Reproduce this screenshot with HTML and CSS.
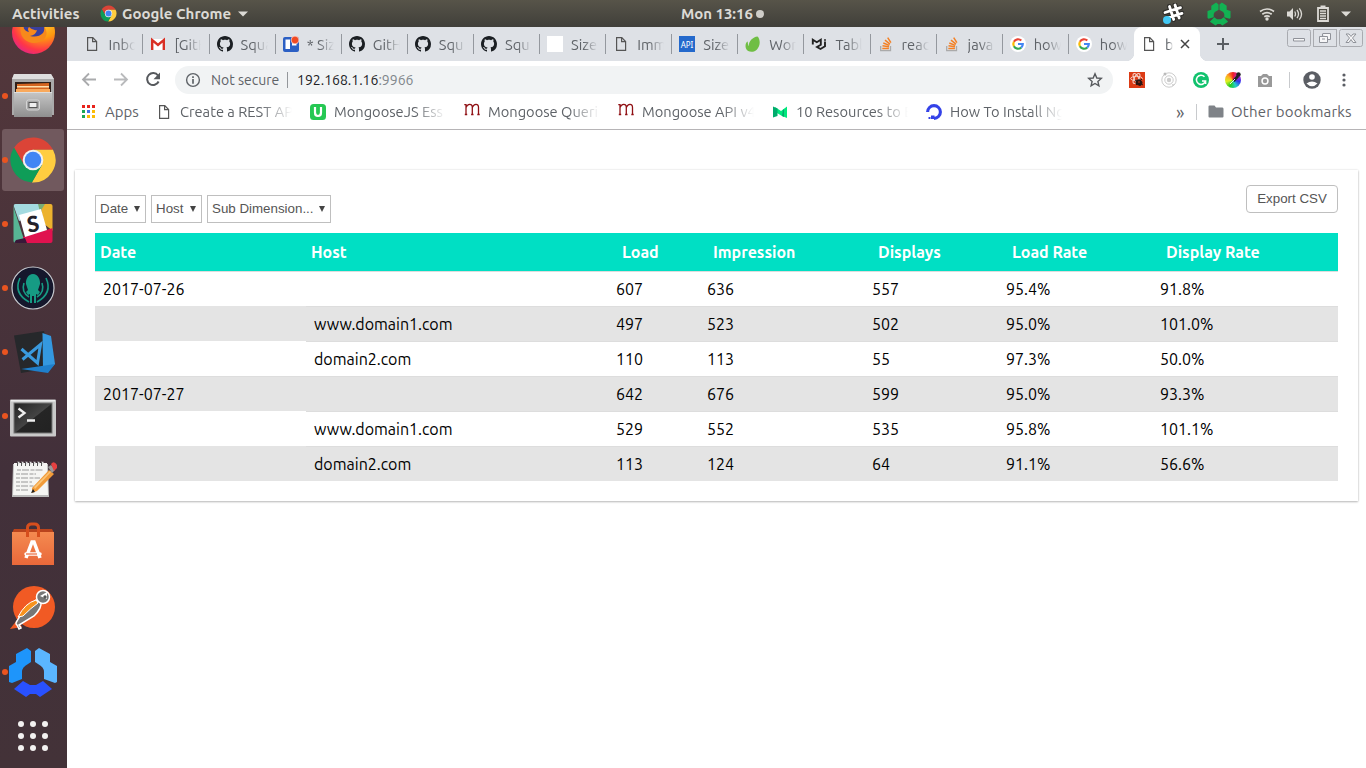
FILE: index.html
```html
<!DOCTYPE html>
<html lang="en">
<head>
<meta charset="utf-8">
<title>Report</title>
<link rel="stylesheet" href="styles.css">
</head>
<body>
<svg class="defs" width="0" height="0">
  <symbol id="chrome" viewBox="0 0 48 48">
    <path fill="#db4437" d="M5.1 11.8A22.5 22.5 0 0 1 44 13.7H24V24L15.1 29.1Z"/>
    <path fill="#ffcd40" d="M44 13.7A22.5 22.5 0 0 1 22.9 46.5L32.9 29.1 24 24V13.7Z"/>
    <path fill="#0f9d58" d="M22.9 46.5A22.5 22.5 0 0 1 5.1 11.8L15.1 29.1 24 24 32.9 29.1Z"/>
    <circle cx="24" cy="24" r="10.3" fill="#f1f1f1"/><circle cx="24" cy="24" r="8.3" fill="#4285f4"/>
  </symbol>
  <symbol id="page" viewBox="0 0 16 16"><path fill="none" stroke="#555" stroke-width="1.2" d="M3.6 1.6h5.2l3.8 3.9v8.9H3.6zM8.6 1.8v3.9h3.9"/></symbol>
  <symbol id="github" viewBox="0 0 16 16"><path fill="#1b1f23" d="M8 0C3.58 0 0 3.58 0 8c0 3.54 2.29 6.53 5.47 7.59.4.07.55-.17.55-.38 0-.19-.01-.82-.01-1.49-2.01.37-2.53-.49-2.69-.94-.09-.23-.48-.94-.82-1.13-.28-.15-.68-.52-.01-.53.63-.01 1.08.58 1.23.82.72 1.21 1.87.87 2.33.66.07-.52.28-.87.51-1.07-1.78-.2-3.64-.89-3.64-3.95 0-.87.31-1.59.82-2.15-.08-.2-.36-1.02.08-2.12 0 0 .67-.21 2.2.82.64-.18 1.32-.27 2-.27s1.36.09 2 .27c1.53-1.04 2.2-.82 2.2-.82.44 1.1.16 1.92.08 2.12.51.56.82 1.27.82 2.15 0 3.07-1.87 3.75-3.65 3.95.29.25.54.73.54 1.48 0 1.07-.01 1.93-.01 2.2 0 .21.15.46.55.38A8.01 8.01 0 0 0 16 8c0-4.42-3.58-8-8-8z"/></symbol>
  <symbol id="google" viewBox="0 0 16 16"><circle cx="8" cy="8" r="8" fill="#fff"/><g fill="none" stroke-width="2.2"><path stroke="#ea4335" d="M3.9 5.7A4.8 4.8 0 0 1 11.3 4.5"/><path stroke="#fbbc05" d="M3.9 10.3a4.8 4.8 0 0 1 0-4.6"/><path stroke="#34a853" d="M11.2 11.6a4.8 4.8 0 0 1-7.3-1.3"/><path stroke="#4285f4" d="M8 8h4.8a4.8 4.8 0 0 1-1.6 3.6"/></g></symbol>
  <symbol id="so" viewBox="0 0 16 16"><path fill="none" stroke="#aaa" stroke-width="1.3" d="M2.7 10v4.7h9.8V10"/><path fill="none" stroke="#f48024" stroke-width="1.5" d="M4.3 12.5h6.6M4.5 9.8l6.5.9M5.3 7l6 2.4M7 4.2l5 3.9M9.7 1.6l3.2 5"/></symbol>
  <symbol id="m" viewBox="0 0 16 16"><path fill="none" stroke="#901014" stroke-width="1.3" d="M.3 2.600h1.700V13M2 5.500C3.500 1.500 8.300 1 8.300 5.500V13M8.300 5.500c1.500-4 6.200-4.500 6.200 0V13M.8 12.500h2.400M7.100 12.500h2.400M13.300 12.500h2.400"/></symbol>
</svg>

<header class="panel">
  <span class="activities">Activities</span>
  <svg class="panel-chrome" width="17" height="17"><use href="#chrome"/></svg>
  <span class="appname">Google Chrome</span>
  <svg class="panel-arrow" width="10" height="6"><path fill="#dcdad5" d="M0 .5h10L5 5.5z"/></svg>
  <span class="clock">Mon 13:16</span><i class="clock-dot"></i>
  <div class="tray">
    <svg width="22" height="22" viewBox="0 0 22 22"><path fill="none" stroke="#302f2b" stroke-width="5" stroke-linecap="round" d="M7.5 3.5l4.2 13M13 2l4.2 13M3 9.5l15.5-4.8M5 15l15-4.6"/><path fill="none" stroke="#fff" stroke-width="2.8" stroke-linecap="round" d="M7.5 3.5l4.2 13M13 2l4.2 13M3 9.5l15.5-4.8M5 15l15-4.6"/><circle cx="5" cy="17" r="4" fill="#42c8f4"/></svg>
    <svg width="24" height="24" viewBox="8 7 50 50" class="tray-hub"><g fill="#12b253"><path d="M27 8l5 4v11l-3 2q-6 2-7 7v7L11 42l-2-2V26l8-3v-8z"/><path d="M39 8l-5 4v11l3 2q6 2 7 7v7l11 3 2-2V26l-8-3v-8z"/><path d="M14 48l9-9 6 4h8l6-4 9 9-12 8-4-3h-6l-4 3z"/></g></svg>
    <svg width="18" height="14" viewBox="0 0 18 14" class="tray-wifi"><g fill="none" stroke="#dcdad5" stroke-width="1.7"><path d="M2 4.5q7-5 14 0M4.3 7.2q4.7-3.2 9.4 0M6.3 9.8q2.7-1.8 5.4 0"/></g><circle cx="9" cy="12" r="1.7" fill="#dcdad5"/></svg>
    <svg width="17" height="14" viewBox="0 0 17 14" class="tray-vol"><path fill="#dcdad5" d="M1 4.5h2.5L7 1v12L3.500 9.500H1z"/><path fill="none" stroke="#dcdad5" stroke-width="1.3" d="M8.7 4.5q1.600 2.500 0 5M11 2.800q3 4.200 0 8.400M13.300 1.300q4.500 5.700 0 11.400"/></svg>
    <svg width="14" height="17" viewBox="0 0 14 17" class="tray-bat"><path fill="none" stroke="#dcdad5" stroke-width="1.8" d="M2 3h10v13H2zM4.500 1.300h5"/><path stroke="#dcdad5" stroke-width="1.500" d="M4 6h6M4 8.500h6M4 11h6M4 13.500h6"/></svg>
    <svg width="10" height="6" class="tray-arrow"><path fill="#dcdad5" d="M0 .5h10L5 5.500z"/></svg>
  </div>
</header>

<div class="desktop">
<nav class="dock">
  <div class="app"><svg viewBox="0 0 67 64"><defs><radialGradient id="ff" cx=".7" cy=".2" r=".95"><stop offset="0" stop-color="#ffd43a"/><stop offset=".45" stop-color="#ff980e"/><stop offset=".75" stop-color="#ff3647"/><stop offset="1" stop-color="#d8209f"/></radialGradient></defs><circle cx="33.500" cy="32.500" r="21.500" fill="url(#ff)"/><circle cx="34" cy="31" r="11" fill="#3a3f9c"/><path fill="#f7891b" d="M22 22q1 9 7 10-2-3 0-5 4 4 8 3-1 5-7 6 8 2 13-3 2-3 1-7 6 9-2 15-10 5-18-2-6-7-2-17z"/></svg></div>
  <div class="app run"><svg viewBox="0 0 67 64"><defs><linearGradient id="fl" x2="0" y2="1"><stop stop-color="#c6c6c6"/><stop offset="1" stop-color="#8f8f8f"/></linearGradient></defs><path fill="#aaa" d="M14 10h37l3 5v36H12V15z"/><path fill="#dedede" d="M14 10h37l3 5H12z"/><path fill="#302019" d="M15 18h36v12H15z"/><path fill="#d56520" d="M17 20l32-1v10H17z"/><path fill="#ffe0ad" d="M17 22h32v1.500H17z"/><path fill="#f9a95c" d="M16 25h34v4H16z"/><path fill="url(#fl)" d="M14 28h38v25H14z"/><path fill="#ddd" d="M14 28h38v1H14z"/><rect x="26.500" y="36" width="13" height="10" rx="2" fill="#aaa" stroke="#d4d4d4"/><rect x="29" y="38.500" width="8" height="5" fill="#eee" stroke="#555"/></svg></div>
  <div class="app run active"><svg viewBox="0 0 67 64"><use href="#chrome" x="9" y="8" width="48" height="48"/></svg></div>
  <div class="app run"><svg viewBox="0 0 67 64"><defs><clipPath id="sl"><rect x="13.500" y="12" width="39" height="39" rx="2"/></clipPath></defs><g clip-path="url(#sl)"><path fill="#a4dbe0" d="M13 12h28v10l-22 7z"/><path fill="#57b694" d="M13 13l12 38H13z"/><path fill="#ecb22e" d="M40 12h13v27l-9-7z"/><path fill="#79ad76" d="M38 12h7l-5 8z"/><path fill="#e0124f" d="M25 51l-2-6 30-9v15z"/><path fill="#391839" d="M14 51l2-3 9-2 2 5z"/><path fill="#fff" d="M19 23l22-6 6 21-22 7z"/></g><text class="slack-s" x="33" y="40" text-anchor="middle" transform="rotate(-9 33 32)">S</text></svg></div>
  <div class="app run"><svg viewBox="0 0 67 64"><circle cx="33" cy="32" r="21" fill="#15172c" stroke="#c7cbd0" stroke-width="1.200"/><path fill="#169b84" d="M33 18c5 0 7.500 6 7 10l-2 6 2 2-2 3-2-1v9h-2v-7h-2v7h-2v-9l-2 1-2-3 2-2-2-6c-.500-4 2-10 7-10z"/><g fill="none" stroke="#169b84" stroke-width="1.600"><path d="M20 22q-7 15 9 24M46 22q7 15-9 24M24 27q-3 9 5 14M42 27q3 9-5 14"/></g></svg></div>
  <div class="app run"><svg viewBox="0 0 67 64"><path fill="#26282b" d="M14 24l28-14 2 32 8 12-32 7z" opacity="0"/><path fill="#26282b" d="M14 15.500l30-4.500 8 37-31 5z"/><path fill="#3498df" d="M42.500 13l8.500 3 4 28-7 7-5-2z"/><path fill="#1f7fcb" d="M21 49l24-3.500 10-1.500-7 9z"/><path fill="none" stroke="#3a9ade" stroke-width="3" d="M21.500 29l16 14 3-18.500-18 15"/></svg></div>
  <div class="app run"><svg viewBox="0 0 67 64"><defs><linearGradient id="tm" x2="1" y2="1"><stop stop-color="#222"/><stop offset=".5" stop-color="#444"/><stop offset=".52" stop-color="#252525"/><stop offset="1" stop-color="#222"/></linearGradient></defs><rect x="10" y="15.500" width="46" height="37" rx="1" fill="#c9c9c9"/><path fill="#eee" d="M11 16h44v1.500H11z"/><rect x="14" y="19" width="38" height="30" fill="url(#tm)" stroke="#777"/><path fill="none" stroke="#eee" stroke-width="2.300" d="M18.500 24.500l6 4.500-6 4.500M27 36.500h8"/></svg></div>
  <div class="app"><svg viewBox="0 0 67 64"><path fill="#bbb" d="M13 16h35l1 33H12z"/><path fill="#f5f5f3" d="M14 15h33l1 32H13z"/><path stroke="#999" stroke-width="1" stroke-dasharray="4 1 7 1.500" d="M17 22h26M16 26h20M16 30h24M16 34h16M16 38h18M16 42h12"/><path stroke="#ddd" stroke-width="2.500" stroke-dasharray="2.500 1.500" d="M17 15h28"/><path stroke="#555" stroke-width="4" stroke-dasharray="1 3" d="M17 16h28"/><path fill="#f29b38" d="M32 40l17-18 5 4-17 17-5 2z"/><path fill="#fac477" d="M34 39l16-16 1 1-16 17z"/><path fill="#222" d="M31 45l2-4 2 3z"/><path fill="#999" d="M48 19l4 6 3-3-4-5z"/><path fill="#e44141" d="M51 16q3-4 6 1v3l-3 3z"/></svg></div>
  <div class="app"><svg viewBox="0 0 67 64"><defs><linearGradient id="sw" x2="0" y2="1"><stop stop-color="#f48a50"/><stop offset="1" stop-color="#e9683a"/></linearGradient></defs><path fill="#b9441d" d="M12 21l2-4h38l2 4z"/><path fill="url(#sw)" d="M12 20h42v33H12z"/><path fill="none" stroke="#d64e1d" stroke-width="3" d="M27.500 25v-9q0-4 4-4h3q4 0 4 4v9"/><path fill="none" stroke="#fff" stroke-width="3.500" d="M26 46l6-16h2l6 16"/><path stroke="#fff" stroke-width="3.500" stroke-linecap="round" d="M26 42h14"/><path stroke="#e9683a" stroke-width="1.200" d="M26 42h11"/></svg></div>
  <div class="app"><svg viewBox="0 0 67 64"><circle cx="34" cy="31" r="21" fill="#f15a24"/><path fill="#f15a24" d="M17 44l-7 9 12-2z"/><path fill="#777" stroke="#fff" stroke-width="1.500" d="M17 45q-2 3 0 4l2 4 2-1-2-3 15-9q8-8 7-14l-5-2q-13 9-19 21z"/><path fill="#f7931e" stroke="#fff" d="M18 41q7-14 18-17l2 3q-7 5-15 13z"/><circle cx="43" cy="21" r="6.500" fill="#777" stroke="#fff" stroke-width="1.500"/><path fill="#fff" d="M40 20l7-4v7z"/><circle cx="45" cy="21" r="1.700" fill="#555"/></svg></div>
  <div class="app run"><svg viewBox="0 0 67 64"><path fill="#1e95fb" d="M27 8l4 3v11l-3 2q-6 3-6 8v7L12 43l-3-1V26l7-4v-8z"/><path fill="#5bb6ff" d="M39 8l-4 3v11l3 2q6 3 6 8v7l11 4 2-1V26l-7-4v-8z"/><path fill="#2951ff" d="M14 49l9-8 7 4h6l7-4 9 8-12 8-4-3h-6l-4 3z"/></svg></div>
  <div class="app"><svg viewBox="0 0 67 64"><g fill="#f3f1f0"><circle cx="21" cy="20" r="3"/><circle cx="33" cy="20" r="3"/><circle cx="45" cy="20" r="3"/><circle cx="21" cy="32" r="3"/><circle cx="33" cy="32" r="3"/><circle cx="45" cy="32" r="3"/><circle cx="21" cy="44" r="3"/><circle cx="33" cy="44" r="3"/><circle cx="45" cy="44" r="3"/></g></svg></div>
</nav>

<div class="browser">
  <div class="tabs">
    <div class="tab"><svg><use href="#page"/></svg><span>Inbo</span></div>
    <div class="tab"><svg viewBox="0 0 16 16"><path fill="#fff" d="M1 3h14v11H1z"/><path fill="none" stroke="#d93025" stroke-width="2.400" d="M2.200 14V4L8 9l5.800-5v10"/></svg><span>[GitH</span></div>
    <div class="tab"><svg><use href="#github"/></svg><span>Squa</span></div>
    <div class="tab"><svg viewBox="0 0 16 16"><rect y="1" width="16" height="15" rx="2" fill="#2b5fc4"/><path fill="#fff" d="M2.500 3.500h4.500v9.500H2.500zM9 6h4.500v3.500H9z"/><circle cx="12" cy="4" r="3.900" fill="#f04a24" stroke="#fff" stroke-width=".6"/></svg><span>* Siz</span></div>
    <div class="tab"><svg><use href="#github"/></svg><span>GitH</span></div>
    <div class="tab"><svg><use href="#github"/></svg><span>Squ</span></div>
    <div class="tab"><svg><use href="#github"/></svg><span>Squ</span></div>
    <div class="tab"><svg viewBox="0 0 16 16"><path fill="#fff" d="M0 0h16v16H0z"/></svg><span>Size</span></div>
    <div class="tab"><svg><use href="#page"/></svg><span>Imm</span></div>
    <div class="tab"><svg viewBox="0 0 16 16"><path fill="#2469cc" d="M0 0h16v16H0z"/><text class="api" x="8" y="12" text-anchor="middle">API</text></svg><span>Size</span></div>
    <div class="tab"><svg viewBox="0 0 16 16"><path fill="#6fbe44" d="M12.500.4c3 2.600 3 9.600-.5 13-3 3.400-9.500 3-11-1C-.2 9.500 1 6 2.700 5.500c.300 2.500.300 4 1 4.500C3.600 5 8 1 12.500.4z"/></svg><span>Wor</span></div>
    <div class="tab"><svg viewBox="0 0 16 16"><path fill="none" stroke="#222" stroke-width="1.900" d="M1.800 8.500V3.700l4 2.500 4-2.500v5L6 11l3.500 2 4.500-2.800V5.500M14 3.300v1.400"/></svg><span>Tabl</span></div>
    <div class="tab"><svg><use href="#so"/></svg><span>reac</span></div>
    <div class="tab"><svg><use href="#so"/></svg><span>java</span></div>
    <div class="tab"><svg><use href="#google"/></svg><span>how</span></div>
    <div class="tab"><svg><use href="#google"/></svg><span>how</span></div>
    <div class="tab current"><svg><use href="#page"/></svg><span>b</span><svg class="x" viewBox="0 0 16 16"><path stroke="#444" stroke-width="1.500" d="M4 4l8 8M12 4l-8 8"/></svg></div>
    <svg class="plus" viewBox="0 0 16 16"><path stroke="#5a5e63" stroke-width="2" d="M2 8h12M8 2v12"/></svg>
    <div class="winbtns">
      <svg viewBox="0 0 24 18"><rect x=".5" y=".5" width="23" height="17" rx="2"/><path d="M6.500 9.500h11v2.500h-11z"/></svg>
      <svg viewBox="0 0 24 18"><rect x=".5" y=".5" width="23" height="17"/><path d="M9.500 4.500h8v6h-2.500M6.500 7.500h8v6h-8zM9 10h3M9.500 5v2.500"/></svg>
      <svg viewBox="0 0 24 18"><rect x=".5" y=".5" width="23" height="17" rx="2"/><path d="M7 5h3l2 2.500L14 5h3l-3.500 4 3.500 4.500h-3l-2-3-2 3H7L10.500 9z"/></svg>
    </div>
  </div>

  <div class="toolbar">
    <svg class="nav" viewBox="0 0 18 18"><path fill="none" stroke="#aaabad" stroke-width="1.800" d="M16 8.500H3M9 2.500l-6 6 6 6"/></svg>
    <svg class="nav" viewBox="0 0 18 18"><path fill="none" stroke="#b9babc" stroke-width="1.800" d="M2 8.500h13M9 2.500l6 6-6 6"/></svg>
    <svg class="nav" viewBox="0 0 18 18"><path fill="none" stroke="#56595d" stroke-width="2" d="M14 4.500A6 6 0 1 0 14.600 10.500"/><path fill="#56595d" d="M16 1.500v6.700H9.500z"/></svg>
    <div class="omnibox">
      <svg width="16" height="16" viewBox="0 0 16 16"><circle cx="8" cy="8" r="6.400" fill="none" stroke="#5f6368" stroke-width="1.400"/><path stroke="#5f6368" stroke-width="1.700" d="M8 7v4.700M8 4.200v1.700"/></svg>
      <span class="notsec">Not secure</span><i class="vline"></i><span class="url">192.168.1.16<em>:9966</em></span>
      <svg class="star" width="16" height="16" viewBox="0 0 16 16"><path fill="none" stroke="#55585c" stroke-width="1.400" d="M8 1.800l1.800 4.200 4.500.4-3.400 3 1 4.500L8 11.500l-3.900 2.400 1-4.500-3.400-3 4.500-.4z"/></svg>
    </div>
    <div class="exts">
      <svg viewBox="0 0 16 16"><path fill="#dc3b15" d="M0 0h16v16H0z"/><g fill="none" stroke="#f6d5cc" stroke-width="1"><ellipse cx="7.500" cy="6.500" rx="5.800" ry="2.200"/><ellipse cx="7.500" cy="6.500" rx="5.500" ry="2.200" transform="rotate(60 7.500 6.500)"/><ellipse cx="7.500" cy="6.500" rx="5.500" ry="2.200" transform="rotate(-60 7.500 6.500)"/></g><ellipse cx="10" cy="10.500" rx="3.500" ry="3" fill="#2a1512" transform="rotate(30 10 10.500)"/><path stroke="#2a1512" d="M6 8l8 5M7 13l6-6M11 7v7"/><circle cx="10" cy="10" r=".8" fill="#dc3b15"/></svg>
      <svg viewBox="0 0 16 16"><g fill="none" stroke="#ccc" stroke-width="1"><circle cx="8" cy="8" r="7.200"/><circle cx="8" cy="8" r="4.200"/></g><circle cx="8" cy="8" r="2.200" fill="#ccc"/><circle cx="4" cy="2" r="1.500" fill="#bbb"/><circle cx="12" cy="13" r="1" fill="#ccc"/></svg>
      <svg viewBox="0 0 16 16"><circle cx="8" cy="8" r="8" fill="#11c26d"/><path fill="none" stroke="#fff" stroke-width="1.500" d="M11.500 4.800A4.600 4.600 0 1 0 12.500 9H9M12.600 8.500v3.500"/></svg>
      <div class="wheel"><svg viewBox="0 0 16 16"><path stroke="#222" stroke-width="2.800" d="M8.500 9L13 4"/><path stroke="#eee" stroke-width="1" d="M5 12l5-5"/><circle cx="13.500" cy="2.500" r="2.200" fill="#222"/></svg></div>
      <svg viewBox="0 0 16 16"><path fill="#999" d="M1 4h3l2-2h4l2 2h3v11H1z"/><circle cx="8" cy="9" r="3.700" fill="#fff"/><circle cx="8" cy="9" r="2.200" fill="#999"/></svg>
    </div>
    <i class="vline pale"></i>
    <svg class="avatar" viewBox="0 0 18 18"><circle cx="9" cy="9" r="8.700" fill="#5b5e64"/><circle cx="9" cy="6" r="2.800" fill="#fff"/><path fill="#fff" d="M3.500 12.500q5.500-4 11 0-5.500 5.500-11 0z"/></svg>
    <svg class="dots" viewBox="0 0 4 14"><g fill="#5b5e64"><circle cx="2" cy="2" r="1.600"/><circle cx="2" cy="7" r="1.600"/><circle cx="2" cy="12" r="1.600"/></g></svg>
  </div>

  <div class="bookmarks">
    <div class="bm b-apps"><svg viewBox="0 0 14 14"><path fill="#e8231c" d="M0 0h3v3H0zM5 0h3v3H5zM10 0h3v3h-3z"/><path fill="#1ba755" d="M0 5h3v3H0zM0 10h3v3H0z"/><path fill="#4173e8" d="M5 5h3v3H5z"/><path fill="#fbbc05" d="M10 5h3v3h-3zM5 10h3v3H5zM10 10h3v3h-3z"/></svg><span>Apps</span></div>
    <div class="bm"><svg><use href="#page"/></svg><span>Create a REST AP</span></div>
    <div class="bm"><svg viewBox="0 0 16 16"><rect width="16" height="16" rx="3.500" fill="#25c853"/><path fill="none" stroke="#fff" stroke-width="2.200" d="M5 3v5.500q0 3.500 3 3.500t3-3.500V3"/></svg><span>MongooseJS Ess</span></div>
    <div class="bm"><svg class="mlogo"><use href="#m"/></svg><span>Mongoose Queri</span></div>
    <div class="bm"><svg class="mlogo"><use href="#m"/></svg><span>Mongoose API v4</span></div>
    <div class="bm"><svg viewBox="0 0 16 16"><path fill="#00e87d" d="M3 3l6 4 6-4.500v11.500l-5-2-5-3z"/><path fill="#00ab6c" d="M1 2.500l4.500 2V12L1 13.500zM11 6l-1 6 2 1V5z"/></svg><span>10 Resources to B</span></div>
    <div class="bm"><svg viewBox="0 0 16 16"><path fill="none" stroke="#3442e8" stroke-width="3.100" d="M1.600 8A6.400 6.400 0 1 1 8 14.400"/><path fill="#3442e8" d="M5 11.500h3.500V15H5zM2.500 13h2v2h-2z"/></svg><span>How To Install Ng</span></div>
    <span class="more">»</span><i class="vline pale"></i>
    <svg class="folder" viewBox="0 0 16 13"><path fill="#7f8388" d="M1.500.5h5L8 2.500h6.500Q15.500 2.500 15.500 4v7.500q0 1-1 1h-13q-1 0-1-1v-10q0-1 1-1z"/></svg>
    <span class="other">Other bookmarks</span>
  </div>

  <main class="viewport">
    <section class="card">
      <div class="controls">
        <div class="picks">
          <div class="pick">Date<i></i></div><div class="pick">Host<i></i></div><div class="pick wide">Sub Dimension...<i></i></div>
        </div>
        <button class="export">Export CSV</button>
      </div>
      <table class="report">
        <colgroup><col class="c1"><col class="c2"><col class="c3"><col class="c4"><col class="c5"><col class="c6"><col class="c7"></colgroup>
        <thead><tr><th>Date</th><th>Host</th><th>Load</th><th>Impression</th><th>Displays</th><th>Load Rate</th><th>Display Rate</th></tr></thead>
        <tbody>
          <tr><td>2017-07-26</td><td></td><td>607</td><td>636</td><td>557</td><td>95.4%</td><td>91.8%</td></tr>
          <tr><td class="blank"></td><td>www.domain1.com</td><td>497</td><td>523</td><td>502</td><td>95.0%</td><td>101.0%</td></tr>
          <tr><td class="blank"></td><td>domain2.com</td><td>110</td><td>113</td><td>55</td><td>97.3%</td><td>50.0%</td></tr>
          <tr><td>2017-07-27</td><td></td><td>642</td><td>676</td><td>599</td><td>95.0%</td><td>93.3%</td></tr>
          <tr><td class="blank"></td><td>www.domain1.com</td><td>529</td><td>552</td><td>535</td><td>95.8%</td><td>101.1%</td></tr>
          <tr><td class="blank"></td><td>domain2.com</td><td>113</td><td>124</td><td>64</td><td>91.1%</td><td>56.6%</td></tr>
        </tbody>
      </table>
    </section>
  </main>
</div>
</div>
</body>
</html>
```
FILE: styles.css
```css
* { box-sizing: border-box; }
body { margin: 0; width: 1366px; height: 768px; overflow: hidden; background: #fff; font-family: Ubuntu, "Noto Sans", sans-serif; }
.defs { position: absolute; }
svg { display: block; flex: none; }
i { font-style: normal; }

/* top panel */
.panel { height: 27px; display: flex; align-items: center; background: linear-gradient(#575449, #403f3a); color: #dcdad5; font-size: 15px; font-weight: 700; padding-left: 12px; white-space: nowrap; }
.activities { width: 88px; letter-spacing: .1px; }
.panel-chrome { margin-right: 5px; }
.appname { width: 116px; }
.clock { margin-left: 433px; width: 75px; letter-spacing: -.05px; }
.panel-arrow { flex: none; }
.clock-dot { width: 8px; height: 8px; border-radius: 50%; background: #cfcdc8; flex: none; }
.tray { display: flex; align-items: center; margin-left: auto; padding-right: 15px; }
.tray-hub { margin-left: 23px; }
.tray-wifi { margin-left: 27px; }
.tray-vol { margin-left: 10px; }
.tray-bat { margin-left: 13px; }
.tray-arrow { margin-left: 11px; }

.desktop { display: flex; height: 741px; }

/* launcher */
.dock { width: 67px; height: 741px; flex: none; display: flex; flex-direction: column; justify-content: flex-end; overflow: hidden; background: linear-gradient(#53373b, #42303a 60%, #433238); }
.app { height: 64px; flex: none; position: relative; }
.app svg { width: 67px; height: 64px; position: relative; }
.app.run::after { content: ""; position: absolute; left: 2px; top: 29px; width: 6px; height: 6px; border-radius: 50%; background: #e95420; }
.app.active::before { content: ""; position: absolute; left: 2px; top: 1px; width: 62px; height: 62px; border-radius: 3px; background: #71595e; }
.slack-s { font: 900 22px Lato, sans-serif; fill: #23212b; }

/* tab strip */
.browser { width: 1299px; flex: none; }
.tabs { height: 34px; background: #dee1e6; display: flex; padding-left: 10.4px; color: #5f6368; font-size: 14.667px; }
.tab { width: 66.100px; height: 34px; flex: none; display: flex; align-items: center; padding-left: 7px; position: relative; }
.tab svg { width: 16px; height: 16px; margin-right: 8px; }
.tab span { width: 27px; overflow: hidden; white-space: nowrap; -webkit-mask-image: linear-gradient(90deg, #000 45%, transparent); mask-image: linear-gradient(90deg, #000 45%, transparent); }
.tab:nth-child(-n+15)::after { content: ""; position: absolute; right: 0; top: 7px; width: 1px; height: 20px; background: #94989e; }
.api { font: 8px "Noto Sans", sans-serif; fill: #fff; }
.tab.current { margin-left: -1px; background: #fff; border-radius: 8px 8px 0 0; }
.tab.current::before { content: ""; position: absolute; left: -8px; right: -8px; bottom: 0; height: 8px; background: radial-gradient(circle at 0 0, transparent 8px, #fff 8.500px) left / 8px 8px no-repeat, radial-gradient(circle at 100% 0, transparent 8px, #fff 8.500px) right / 8px 8px no-repeat; }
.tab.current span { width: 8px; margin-right: 4px; }
.tab.current .x { margin: 0; }
.plus { width: 16px; height: 16px; margin: 9px 0 0 15px; }
.winbtns { display: flex; gap: 2px; margin: 2px 3px 0 auto; }
.winbtns svg { width: 24px; height: 18px; fill: none; stroke: #a9abb0; }
.winbtns path { fill: #f6f6f7; stroke: #8f9299; }

/* toolbar */
.toolbar { height: 38px; display: flex; align-items: center; padding-left: 13px; }
.nav { width: 18px; height: 18px; margin-right: 14px; }
.omnibox { width: 938px; height: 28px; border-radius: 14px; background: #f1f3f4; margin-left: -1px; display: flex; align-items: center; padding: 0 10px; font-size: 14px; color: #5f6368; white-space: nowrap; }
.notsec { margin-left: 10px; width: 76px; }
.vline { width: 1px; height: 16px; background: #94979b; flex: none; }
.vline.pale { background: #c8cacd; }
.url { margin-left: 9px; color: #202124; }
.url em { font-style: normal; color: #80868b; }
.star { margin-left: auto; }
.exts { display: flex; gap: 16px; margin: 0 16px 0 16px; }
.exts svg, .wheel { width: 16px; height: 16px; }
.wheel { border-radius: 50%; background: conic-gradient(#e22, #c2c, #33e, #2cc, #2c2, #de2, #fa2, #e22); }
.avatar { width: 18px; height: 18px; margin-left: 13px; }
.dots { width: 4px; height: 14px; margin-left: 21px; }

/* bookmarks */
.bookmarks { height: 31px; border-bottom: 1px solid #b6b4b6; display: flex; align-items: center; padding: 0 0 5px 14px; font-size: 14.667px; color: #5f6368; white-space: nowrap; }
.bm { display: flex; align-items: center; flex: none; width: 154px; }
.bm svg { width: 16px; height: 16px; margin-right: 8px; }
.bm span { overflow: hidden; width: 112px; -webkit-mask-image: linear-gradient(90deg, #000 72%, transparent); mask-image: linear-gradient(90deg, #000 72%, transparent); }
.bm.b-apps { width: 75px; font-size: 15px; }
.bm.b-apps svg { width: 14px; height: 14px; margin: 1px 9px 0 1px; }
.bm.b-apps span { width: auto; -webkit-mask: none; mask: none; }
.bm .mlogo { margin-top: -4px; }
.more { margin-left: auto; width: 20px; font-size: 18px; line-height: 18px; }
.folder { width: 16px; height: 13px; margin: 0 7px 0 11px; }
.other { width: 135px; font-size: 15px; letter-spacing: .2px; }

/* page */
.viewport { padding: 40px 8px; }
.card { height: 331px; padding: 16px 20px 20px; background: #fff; box-shadow: 0 1px 2px rgba(0,0,0,.25), 0 0 2px rgba(0,0,0,.12); }
.controls { height: 47px; display: flex; justify-content: space-between; font: 13.333px "Liberation Sans", sans-serif; color: #555; }
.picks { display: flex; gap: 5px; padding-top: 9px; }
.pick { height: 28px; width: 51px; border: 1px solid #bfbfbf; display: flex; align-items: center; justify-content: space-between; padding: 0 5px 1px 4px; white-space: nowrap; }
.pick.wide { width: 124px; }
.pick i { width: 0; height: 0; border: 3px solid transparent; border-top: 6px solid #444; border-bottom: 0; }
.export { width: 92px; height: 28px; margin-top: -1px; border: 1px solid #bfbfbf; border-radius: 4px; background: #fff; font: inherit; color: #555; padding: 0 0 1px; }
.report { width: 1243px; table-layout: fixed; border-collapse: separate; border-spacing: 0; font-size: 16px; color: #000; }
.c1 { width: 211px; } .c2 { width: 302px; } .c3 { width: 91px; } .c4 { width: 165px; } .c5 { width: 134px; } .c6 { width: 154px; } .c7 { width: 186px; }
.report th { height: 38px; padding: 0 0 0 14px; background: #00dfc4; color: #fff; text-align: left; font-weight: 700; font-size: 16px; line-height: 20px; }
.report th:nth-child(-n+2) { padding-left: 5px; }
.report td { height: 35px; padding: 0 0 0 8px; border-top: 1px solid #ddd; line-height: 20px; }
.report td.blank { border-top: 0; }
.report tbody tr:nth-child(even) { background: #e4e4e4; }
```
